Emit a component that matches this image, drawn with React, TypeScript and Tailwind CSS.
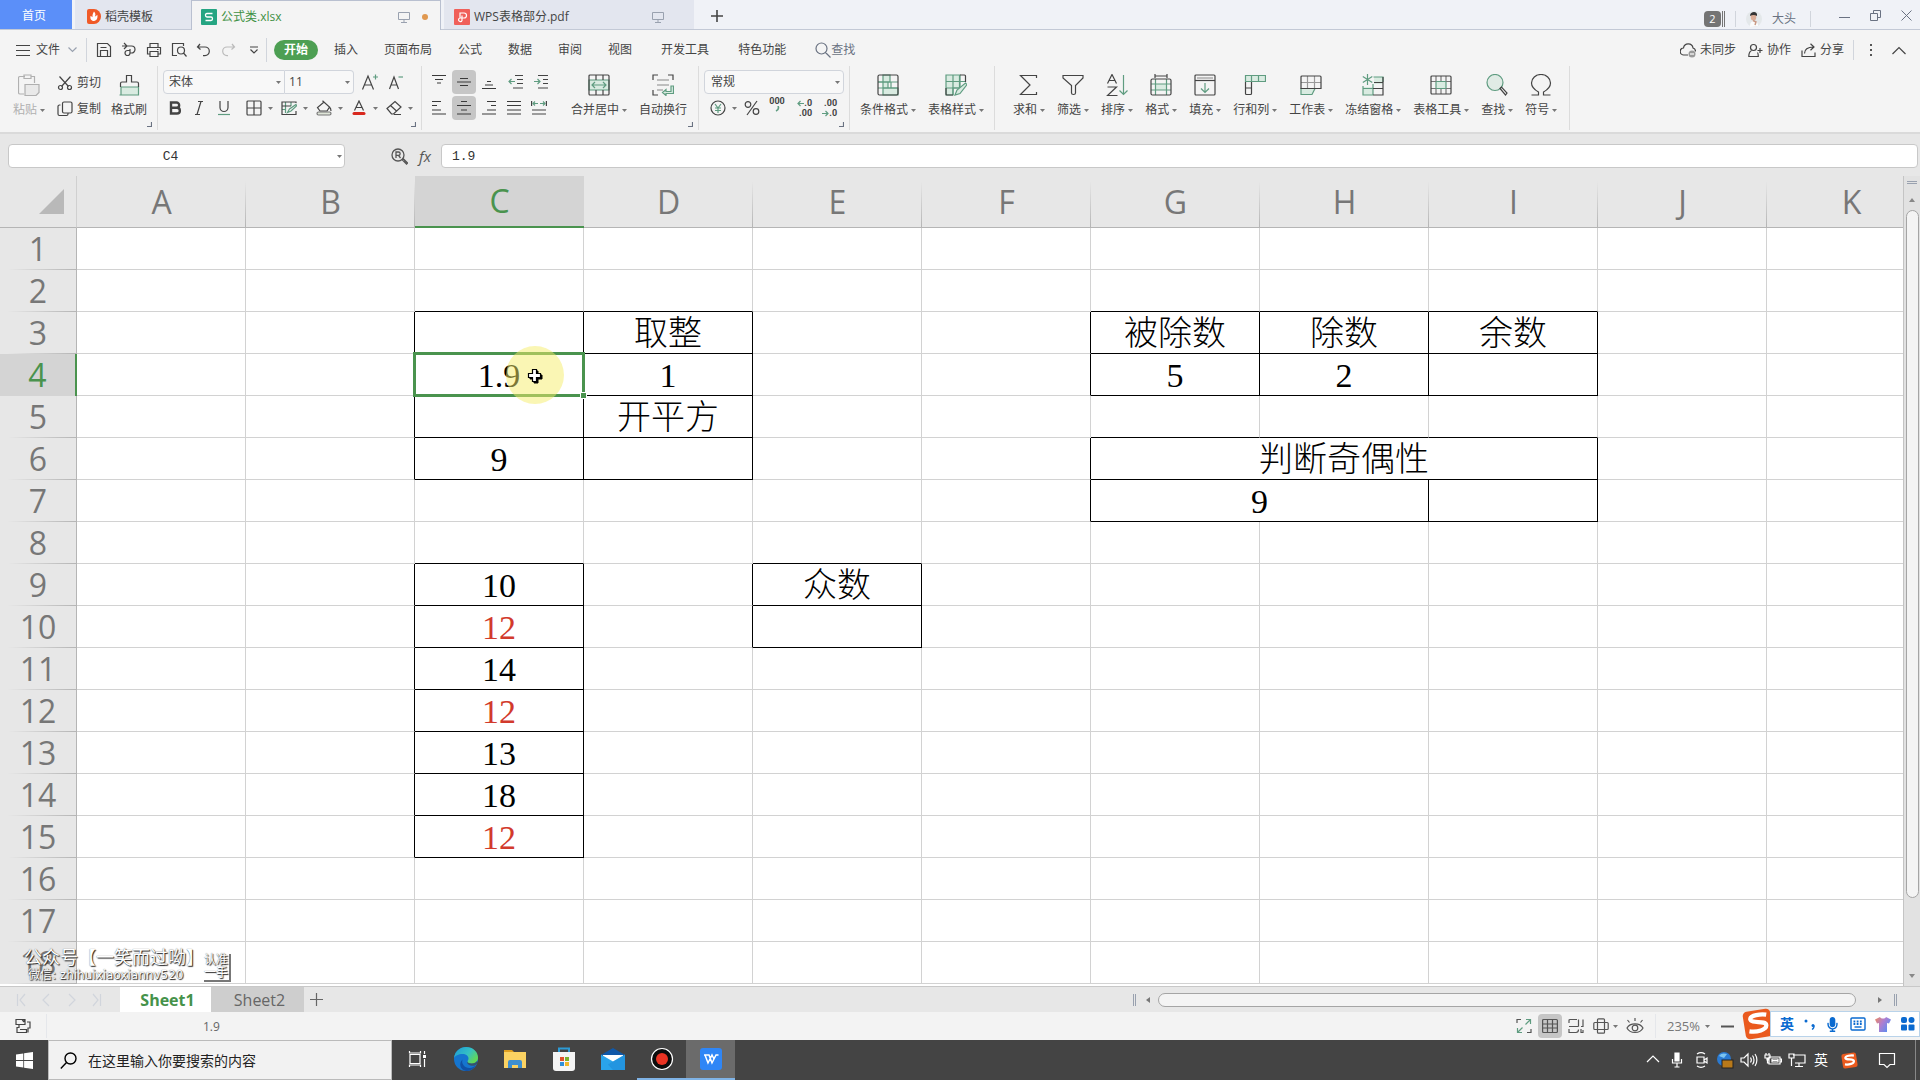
import React from 'react';
import { FaMicrophone, FaTshirt } from 'react-icons/fa';

type Kids = { children?: React.ReactNode };

const G = '#5f9c80';
const GF = '#d9ebe1';

const Svg: React.FC<Kids & { w?: number; h?: number; className?: string; sw?: number }> = ({ w = 16, h = w, className = '', sw = 1.2, children }) => (
  <svg width={w} height={h} viewBox={`0 0 ${w} ${h}`} fill="none" stroke="currentColor" strokeWidth={sw} className={`shrink-0 ${className}`} aria-hidden="true">
    {children}
  </svg>
);

const Caret = () => (
  <svg width="5" height="3" viewBox="0 0 5 3" className="shrink-0" aria-hidden="true">
    <path d="M0 0h5L2.5 3z" fill="#777" />
  </svg>
);

const Corner = () => (
  <Svg w={6} className="absolute right-[5px] bottom-[3px] text-gray-500">
    <path d="M5.500 1v4.500H1" />
  </Svg>
);

/* ---------- title bar ---------- */

const Monitor = () => (
  <Svg w={12} className="text-gray-400" sw={1}>
    <path d="M.5 1.500h11v7H.5zM6 8.500V11M3 11.500h6" />
  </Svg>
);

const TitleBar = () => (
  <header className="flex h-[30px] items-stretch border-b border-[#c3c9d6] bg-[#f0f2f7] text-xs text-[#444]">
    <button className="w-[72px] bg-[#5b8ff9] pt-[3px] pr-1 text-white">首页</button>
    <button className="ml-[3px] flex w-[116px] items-center gap-1 bg-[#e3e6ef] pt-1 pl-3">
      <svg width="14" height="15" viewBox="0 0 14 15" aria-hidden="true">
        <path d="M0 2a2 2 0 0 1 2-2h5a7 7.500 0 0 1 0 15H2a2 2 0 0 1-2-2z" fill="#f05a28" />
        <path d="M7 2.500c2 2 1.500 4 .8 5 1-.3 2-1 2.500-1.800.7 3-.5 6-3.300 6.300C4 12 3 9.500 3.500 7c.8.3 1.500.8 2 1.300C5.300 6 6 4 7 2.500z" fill="#fff" />
      </svg>
      稻壳模板
    </button>
    <button className="-mb-px flex w-[250px] items-center border border-b-0 border-[#b9c0d0] bg-[#f4f4f4] pt-[3px] pr-3 pl-[9px] text-[#3f9145]">
      <svg width="16" height="16" viewBox="0 0 16 16" aria-hidden="true">
        <rect width="16" height="16" rx="1" fill="#25a582" />
        <path d="M11.500 4.500H6a1.500 1.500 0 0 0-1.500 1.700C4.500 7.400 5 8 6 8h4c1 0 1.500.6 1.500 1.700 0 1.200-.5 1.800-1.500 1.800H4.500" fill="none" stroke="#fff" strokeWidth="1.300" />
      </svg>
      <span className="ml-1 flex-1 text-left">公式类.xlsx</span>
      <Monitor />
      <i className="ml-3 h-[6px] w-[6px] rounded-full bg-[#e0984f]" />
    </button>
    <button className="ml-[3px] flex w-[250px] items-center bg-[#e3e6ef] pt-1 pr-[30px] pl-[10px]">
      <svg width="16" height="16" viewBox="0 0 16 16" aria-hidden="true">
        <rect width="16" height="16" rx="1" fill="#f0605a" />
        <path d="M6 9V4h4a2.500 2.500 0 0 1 0 5H6.500a1.800 1.800 0 1 0 1.500 2.500V6.500" fill="none" stroke="#fff" strokeWidth="1.200" />
      </svg>
      <span className="ml-1 flex-1 text-left">WPS表格部分.pdf</span>
      <Monitor />
    </button>
    <button className="w-[46px] pt-[3px]" aria-label="新建">
      <Svg w={12} className="mx-auto" sw={1.600}><path d="M6 0v12M0 6h12" /></Svg>
    </button>
    <div className="ml-auto flex items-center pt-2 text-gray-500">
      <button className="flex items-center gap-px" aria-label="窗口">
        <span className="h-4 w-[17px] rounded-sm bg-[#747474] text-center text-[11px] leading-4 text-white">2</span>
        <i className="h-4 w-px bg-[#747474]" />
        <i className="h-4 w-px bg-[#747474]" />
      </button>
      <i className="mx-[10px] h-4 w-px bg-gray-300" />
      <button className="flex items-center gap-[10px]">
        <svg width="16" height="16" viewBox="0 0 16 16" aria-hidden="true">
          <circle cx="8" cy="8" r="8" fill="#e4e8ea" />
          <path d="M4 16c0-4 1-5 3-6h2c2 1 3 2 3 5z" fill="#fbfbfb" />
          <ellipse cx="7.500" cy="6" rx="2.800" ry="3.500" fill="#dcae98" />
          <path d="M4 5c0-3 2-4 4-4s3.500 1.500 3 4c-2-1.500-5-1.500-7 0z" fill="#333" />
          <path d="M7 9.500l3 1.500-1 3" stroke="#c99a85" strokeWidth="1.500" fill="none" />
        </svg>
        大头
      </button>
      <i className="mr-7 ml-[14px] h-4 w-px bg-gray-300" />
    </div>
    <div className="flex items-center gap-5 pt-px pr-2 text-gray-500">
      <button aria-label="最小化"><Svg w={11} sw={1}><path d="M0 7.500h11" /></Svg></button>
      <button aria-label="还原"><Svg w={11} sw={1}><path d="M.5 3.500h7v7h-7zM3.500 3.500v-3h7v7h-3" /></Svg></button>
      <button aria-label="关闭"><Svg w={11} sw={1}><path d="M.5.5l10 10M10.500.5l-10 10" /></Svg></button>
    </div>
  </header>
);

/* ---------- menu row ---------- */

const quickIcons = [
  { label: '保存', d: 'M1.500 1.500h10l3 3v10h-13zM4.500 5.500h6M4.500 14.500v-6h7v6' },
  { label: '输出为PDF', d: 'M3 1l3 3-3 3M1 4h9.500a3.500 3.500 0 0 1 0 7H9V7M9 11a2.500 2.500 0 1 1-2.500-2.500H9' },
  { label: '打印', d: 'M4 5V1.500h8V5M4 12H1.500V5.500h13V12H12M4 9.500h8v5H4zM11 7.500h1.500' },
  { label: '打印预览', d: 'M6 13.500H1.500v-12h11V4M13.500 8.500a3.500 3.500 0 1 1-7 0 3.500 3.500 0 0 1 7 0zM12.500 11l3 3.500' },
  { label: '撤销', d: 'M4 2L1.500 5l3 2.500M1.500 5H9a4.300 4.300 0 0 1 0 8.600H7' },
];

const menuTabs = ['插入', '页面布局', '公式', '数据', '审阅', '视图'];

const MenuRow = () => (
  <div className="flex h-9 items-center pt-1 text-xs text-[#444]">
    <button className="flex items-center pl-4">
      <Svg w={14}><path d="M0 2.500h14M0 7.500h14M0 12.500h14" /></Svg>
      <span className="ml-[6px]">文件</span>
      <Svg w={9} h={6} className="ml-2 text-gray-400"><path d="M.5.5l4 4 4-4" /></Svg>
    </button>
    <i className="mr-1 ml-[9px] h-6 w-px bg-gray-300" />
    {quickIcons.map((q) => (
      <button key={q.label} className="w-[25px]" aria-label={q.label}>
        <Svg className="mx-auto"><path d={q.d} /></Svg>
      </button>
    ))}
    <button className="w-[25px] text-[#bbb]" aria-label="恢复">
      <Svg className="mx-auto"><path d="M11 2l2.500 3-3 2.500M13.500 5H6a4.300 4.300 0 0 0 0 8.600h1" /></Svg>
    </button>
    <button className="w-[25px]" aria-label="更多">
      <Svg w={8} className="mx-auto"><path d="M0 1h8M.5 3.500L4 7l3.500-3.500" /></Svg>
    </button>
    <i className="h-6 w-px bg-gray-300" />
    <nav className="ml-[7px] flex items-center gap-[26px]">
      <button className="-mr-[10px] h-5 w-11 rounded-full bg-[#4d9f53] font-bold text-white">开始</button>
      {menuTabs.map((t) => <button key={t}>{t}</button>)}
    </nav>
    <nav className="ml-[29px] flex items-center gap-[29px]">
      <button>开发工具</button>
      <button>特色功能</button>
      <button className="flex items-center text-gray-500">
        <Svg><path d="M12 6.500a5.500 5.500 0 1 1-11 0 5.500 5.500 0 0 1 11 0zM10.500 10.500l5 5" /></Svg>
        查找
      </button>
    </nav>
    <div className="ml-auto flex items-center pr-[14px]">
      <button className="flex items-center gap-1">
        <Svg>
          <path d="M8 13H4a3.500 3.500 0 0 1-.5-7A4.800 4.800 0 0 1 13 6c2 .5 2.500 2 2.500 3.500" />
          <circle cx="12" cy="12" r="3.500" fill="#999" stroke="none" />
          <path d="M10 12h4" stroke="#fff" />
        </Svg>
        未同步
      </button>
      <button className="ml-3 flex items-center gap-1">
        <Svg w={15}><path d="M8.500 4.500a3 3 0 1 1-6 0 3 3 0 0 1 6 0zM3.500 7.500C1.500 8.500.8 10 .8 13.500h9.500c0-2 0-3-.8-4M12 5v5M9.500 7.500h5" /></Svg>
        协作
      </button>
      <button className="ml-[10px] flex items-center gap-1">
        <Svg w={15}><path d="M1 7.500v6h13v-4M3.500 10.500c0-4 3-6.500 9-6.500M9.500.8L13 4 9.500 7.300" /></Svg>
        分享
      </button>
      <i className="mx-[9px] h-5 w-px bg-gray-300" />
      <button className="w-4" aria-label="选项">
        <svg width="3" height="14" viewBox="0 0 3 14" fill="#555" className="mx-auto"><path d="M0 1h2v2H0zM0 6h2v2H0zM0 11h2v2H0z" /></svg>
      </button>
      <button className="ml-[13px]" aria-label="折叠功能区">
        <Svg w={14} h={9}><path d="M.5 8L7 1.500 13.500 8" /></Svg>
      </button>
    </div>
  </div>
);

/* ---------- ribbon ---------- */

const Group: React.FC<Kids & { className: string }> = ({ className, children }) => (
  <div className={`relative flex h-16 shrink-0 items-start border-r border-[#dcdcdc] pt-1 ${className}`}>{children}</div>
);

const Big: React.FC<Kids & { label: string; caret?: boolean; dim?: boolean }> = ({ label, caret = true, dim, children }) => (
  <button className={`flex flex-col items-center pt-1 ${dim ? 'text-[#b0b0b0]' : 'text-[#444]'}`}>
    <Svg w={22}>{children}</Svg>
    <span className="mt-[6px] flex items-center gap-[3px] leading-4">
      {label}
      {caret && <Caret />}
    </span>
  </button>
);

const Small: React.FC<Kids & { label: string; on?: boolean; caret?: boolean }> = ({ label, on, caret, children }) => (
  <button
    aria-label={label}
    className={`flex h-6 items-center ${caret ? 'w-[35px] gap-[6px] pl-[2px]' : 'w-6 justify-center'} ${on ? 'rounded bg-[#c6c6c6]' : ''}`}
  >
    {children}
    {caret && <Caret />}
  </button>
);

const Lines = ({ d }: { d: string }) => <Svg><path d={d} stroke="#3a3a3a" /></Svg>;

const bigTools = [
  { label: '求和', icon: <path d="M18.500 4V1.500h-16L12 11l-9.500 9.500h16V18" /> },
  { label: '筛选', icon: <path d="M1 1.500h20v2.500l-7.500 7.500V19c0 2-4 2-4 0v-7.500L1 4z" /> },
  {
    label: '排序',
    icon: <><path d="M1.500 9.500L6 .5l4.500 9M3 6.500h6M1.500 13h9L1.500 21.500h10" /><path d="M17.500 1v19.500M13.500 16.500l4 4 4-4" stroke={G} /></>,
  },
  {
    label: '格式',
    icon: <><path d="M5 0v4M17 0v4M5 2h12" /><path d="M5 10h12v6H5z" fill={GF} stroke="none" /><path d="M1 10h20M1 16h20M5.500 5v16M16.500 5v16" stroke={G} /><rect x="1" y="5" width="20" height="16" rx="1.500" /></>,
  },
  {
    label: '填充',
    icon: <><rect x="1" y="1" width="20" height="20" rx="1" /><path d="M1 6.500h20" /><path d="M3 4h16" stroke="#999" /><path d="M11 9v9.500M7 14.500l4 4 4-4" stroke={G} /></>,
  },
  {
    label: '行和列',
    icon: <><path d="M1.500 8v11.500a1 1 0 0 0 1 1h4a1 1 0 0 0 1-1V8M1.500 14h6" /><path d="M1.500 1.500h20v6h-20zM7.500 1.500v6M14.500 1.500v6" stroke={G} fill={GF} /></>,
  },
  {
    label: '工作表',
    icon: <><path d="M1 14.500h14l-3 6H1z" stroke={G} fill={GF} /><path d="M1 8.500h20M7.500 2v12.500M14.500 2v12.500" stroke="#999" /><path d="M1 14.500V3a1 1 0 0 1 1-1h18a1 1 0 0 1 1 1v11.500z" /></>,
  },
  {
    label: '冻结窗格',
    icon: <><path d="M12 3h9v7h-9zM1 13h10v8H1z" fill={GF} stroke="none" /><path d="M11.500 3H21v5M1 12v9h10M1 14.500h10M11 10v11" stroke={G} /><path d="M11 21h10V3M11 14.500h10M12 8.500h9" /><path d="M5.500 0v11M.8 2.500l9.500 6M10.300 2.500l-9.500 6" stroke={G} /></>,
  },
  {
    label: '表格工具',
    icon: <><path d="M6 7.500h10v7H6z" stroke={G} fill={GF} /><path d="M6 2v5M16 2v5M6 15v5M16 15v5M11 2v5M11 15v5M1 7.500h5M16 7.500h5M1 14.500h5M16 14.500h5" stroke="#777" /><rect x="1" y="2" width="20" height="18" rx="1" /></>,
  },
  {
    label: '查找',
    icon: <><circle cx="9" cy="8.500" r="8" stroke={G} fill="#e0ebe5" /><path d="M14 14.500l1.500-1.500 5.500 6-1.500 2z" /></>,
  },
  { label: '符号', icon: <path d="M1.500 21h7v-3C4 15.500 1.500 12.500 1.500 9a9.500 8.500 0 0 1 19 0c0 3.500-2.500 6.500-7 9v3h7" /> },
];

const Ribbon = () => (
  <div className="flex h-[66px] overflow-hidden text-xs text-[#444]">
    <Group className="pr-[10px] pl-[13px]">
      <Big label="粘贴" dim>
        <path d="M7 2.500H2a1.500 1.500 0 0 0-1.500 1.500v14.500A1.500 1.500 0 0 0 2 20h4M13 2.500h3.500V9M6 1h7v3.500H6z" />
        <path d="M7 10.500h14v8l-3 3H7z" fill="#e9e9e9" />
      </Big>
      <div className="ml-3 flex flex-col gap-[2px] pt-px">
        <button className="flex h-6 items-center gap-1">
          <Svg><path d="M2.500 1.500l9 10M13.500 1.500l-9 10" /><circle cx="3.500" cy="12.500" r="2" /><circle cx="12.500" cy="12.500" r="2" /></Svg>
          剪切
        </button>
        <button className="flex h-6 items-center gap-1">
          <Svg><rect x="5.500" y="1" width="9.500" height="11" rx="1.500" /><path d="M3.500 4H2.500A1.500 1.500 0 0 0 1 5.500V13a1.500 1.500 0 0 0 1.500 1.500h7A1.500 1.500 0 0 0 11 13v-1" /></Svg>
          复制
        </button>
      </div>
      <div className="ml-[10px] flex">
        <Big label="格式刷" caret={false}>
          <path d="M3 13v8H1.500h19V13z" stroke={G} fill={GF} />
          <path d="M2.500 13V9.500a1.500 1.500 0 0 1 1.500-1.500h4.500V1.500h5V8H19a1.500 1.500 0 0 1 1.500 1.500V13" />
        </Big>
      </div>
      <Corner />
    </Group>

    <Group className="w-[264px] flex-col gap-[2px] pl-[5px]">
      <div className="flex h-6 items-center">
        <label className="relative flex items-center">
          <select aria-label="字体" className="h-6 w-[122px] appearance-none rounded-l border border-gray-300 bg-[#f8f8f8] pl-[5px]">
            <option>宋体</option>
          </select>
          <span className="pointer-events-none absolute right-1"><Caret /></span>
        </label>
        <label className="relative flex items-center">
          <select aria-label="字号" className="h-6 w-[69px] appearance-none rounded-r border border-l-0 border-gray-300 bg-[#f8f8f8] pl-1 text-xs">
            <option>11</option>
          </select>
          <span className="pointer-events-none absolute right-1"><Caret /></span>
        </label>
        <span className="ml-1 flex gap-[2px]">
          <Small label="增大字号">
            <Svg w={18}><path d="M1.500 16.500L7 3l5.500 13.500M3.500 12h7" /><path d="M12 4h5M14.500 1.500v5" stroke={G} /></Svg>
          </Small>
          <Small label="减小字号">
            <Svg w={18}><path d="M2.500 16L7 4l4.500 12M4 12h6" /><path d="M11.500 4h4.500" stroke={G} /></Svg>
          </Small>
        </span>
      </div>
      <div className="flex">
        <Small label="加粗"><Svg sw={2.400}><path d="M4 2.500h5.500a2.500 2.500 0 0 1 0 5.300H4zM4 7.800h6a2.800 2.800 0 0 1 0 5.700H4z" /></Svg></Small>
        <Small label="倾斜"><Svg><path d="M7 1.500h5M4 14.500h5M10 1.500l-4 13" /></Svg></Small>
        <span className="mr-2 ml-px flex">
          <Small label="下划线"><Svg><path d="M4 1v6.500a4 4 0 0 0 8 0V1" /><path d="M2 14.500h12" stroke={G} /></Svg></Small>
        </span>
        <Small label="边框" caret><Svg><rect x="1" y="1" width="14" height="14" rx="1" /><path d="M8 1v14M1 8h14" /></Svg></Small>
        <Small label="绘图边框" caret>
          <Svg><path d="M1 9.500h4M4.500 2v11M10 2v4" stroke={G} /><path d="M15 3V2H1v12.500h14V11M1 6h9" /><path d="M6.500 12.500l2-3.500L15 4.500l.5 1.500L10 11z" stroke={G} /></Svg>
        </Small>
        <Small label="填充颜色" caret>
          <Svg><path d="M6.500.8l7 6.200-2.500 4H4L1.500 7.500 7.500 2.500M13.500 7c1 1 1.500 2 1.500 4" /><rect x="1" y="12" width="14" height="3" rx="1.500" fill="#dfe5d8" stroke="#777" /></Svg>
        </Small>
        <Small label="字体颜色" caret>
          <Svg><path d="M3.500 10.500L8 1l4.500 9.500M5 7.500h6" /><rect x="1.500" y="12" width="13" height="3" rx="1.500" fill="#d8281e" stroke="none" /></Svg>
        </Small>
        <Small label="清除" caret>
          <Svg><path d="M1 8.500L9 1.500 15 7 7.500 14H5.500zM4.500 5.500l6 5.500M8 14.500h7" /></Svg>
        </Small>
      </div>
      <Corner />
    </Group>

    <Group className="w-[277px] pl-[5px]">
      <div className="flex flex-col gap-[2px]">
        <div className="flex gap-px">
          <Small label="顶端对齐"><Lines d="M1 1.500h14M4 5.500h8M6 9h4" /></Small>
          <Small label="垂直居中" on><Lines d="M4 4.500h8M1 8h14M4 11.500h8" /></Small>
          <Small label="底端对齐"><Lines d="M6 7.500h4M4 11h8M1 14.500h14" /></Small>
          <i className="w-px" />
          <Small label="减少缩进"><Svg><path d="M7 1.500h8M9 5.500h6M9 9.500h6M5 14h10" /><path d="M7 7.500H1M3.500 5L1 7.500 3.500 10" stroke={G} /></Svg></Small>
          <Small label="增加缩进"><Svg><path d="M5 1.500h10M10 5.500h5M10 9.500h5M5 14h10" /><path d="M1 7.500h6M4.500 5L7 7.500 4.500 10" stroke={G} /></Svg></Small>
        </div>
        <div className="flex gap-px">
          <Small label="左对齐"><Lines d="M1 1.500h9M1 5.500h5M1 10h9M1 14h14" /></Small>
          <Small label="水平居中" on><Lines d="M5 1.500h6M1 5.500h14M5 10h6M1 14h14" /></Small>
          <Small label="右对齐"><Lines d="M6 1.500h9M10 5.500h5M6 10h9M1 14h14" /></Small>
          <Small label="两端对齐"><Lines d="M1 1.500h14M1 5.500h14M1 10h14M1 14h14" /></Small>
          <Small label="分散对齐"><Svg><path d="M.6 1v5M15.400 1v5M1 10h14M1 14h14" /><path d="M7 3.500H2M4 1.500l-2 2 2 2M9 3.500h5M12 1.500l2 2-2 2" stroke={G} /></Svg></Small>
        </div>
      </div>
      <div className="ml-[18px] flex gap-3">
        <Big label="合并居中">
          <path d="M1 6h20v10H1z" fill={GF} stroke={G} />
          <rect x="1" y="1" width="20" height="20" rx="1" />
          <path d="M8 1v5M15 1v5M8 16v5M15 16v5" />
          <path d="M4 11h14M7 8l-3 3 3 3M15 8l3 3-3 3" stroke={G} />
        </Big>
        <Big label="自动换行" caret={false}>
          <path d="M1 6V1h5M16 1h5v5M1 16v5h5" />
          <path d="M5 6h12M5 11h12M5 16h6" stroke="#888" />
          <path d="M21.500 12v7.500H14v2l-3.500-3 3.500-3v2h5V12z" stroke={G} fill={GF} />
        </Big>
      </div>
      <Corner />
    </Group>

    <Group className="w-[151px] flex-col gap-[2px] pl-[5px]">
      <label className="relative flex items-center">
        <select aria-label="数字格式" className="h-6 w-[140px] appearance-none rounded border border-gray-300 bg-[#f8f8f8] pl-[6px]">
          <option>常规</option>
        </select>
        <span className="pointer-events-none absolute right-1"><Caret /></span>
      </label>
      <div className="flex items-center pl-1">
        <Small label="货币" caret><Svg><circle cx="8" cy="8" r="7" /><path d="M5 4l3 4 3-4M8 8v5M5 8h6M5 10.500h6" stroke={G} /></Svg></Small>
        <span className="-ml-[3px] flex"><Small label="百分比"><Svg><circle cx="4" cy="4.500" r="2.800" /><circle cx="12" cy="11.500" r="2.800" /><path d="M13 1L3 15" /></Svg></Small></span>
        <button className="flex h-6 w-[26px] flex-col items-center font-['Roboto',sans-serif] text-[9px] leading-[10px] font-bold text-[#444]">
          000
          <Svg w={5} h={6} sw={1.600}><path d="M3 0c1 2 0 4-2 5" stroke={G} /></Svg>
        </button>
        <button aria-label="增加小数位数" className="flex h-6 w-[26px] flex-col items-end justify-center pr-1 font-['Roboto',sans-serif] text-[9px] leading-[10px] font-bold">
          <span className="flex items-center"><Svg w={7}><path d="M7 3.500H1M3.500 1L1 3.500 3.500 6" stroke={G} /></Svg>.0</span>
          <span>.00</span>
        </button>
        <button aria-label="减少小数位数" className="flex h-6 w-[25px] flex-col items-end justify-center pr-1 font-['Roboto',sans-serif] text-[9px] leading-[10px] font-bold">
          <span>.00</span>
          <span className="flex items-center"><Svg w={7}><path d="M0 3.500h6M3.500 1L6 3.500 3.500 6" stroke={G} /></Svg>.0</span>
        </button>
      </div>
      <Corner />
    </Group>

    <Group className="gap-3 pr-[10px] pl-[10px]">
      <Big label="条件格式">
        <path d="M6 1h7v7H6zM6 8h5v6H6zM6 14h15v7H6zM1 8h5" fill={GF} stroke={G} />
        <path d="M1 8h20M1 14h20M14 8v6" stroke={G} />
        <rect x="1" y="1" width="20" height="20" rx="1.500" />
      </Big>
      <Big label="表格样式">
        <path d="M1 1h14v13H8v7H1z" fill={GF} stroke={G} />
        <path d="M1 7.500h19M1 14h14M8 1v20M14.500 1v13" stroke={G} />
        <path d="M15 1h4.500a1 1 0 0 1 1 1v6M1 14v6a1 1 0 0 0 1 1h6" />
        <path d="M10 21l2-5L20.500 9l1.500 1.500-7 9z" fill={GF} stroke={G} />
      </Big>
    </Group>

    <Group className="gap-3 pr-3 pl-[18px]">
      {bigTools.map((t) => <Big key={t.label} label={t.label}>{t.icon}</Big>)}
    </Group>
  </div>
);

/* ---------- formula bar ---------- */

const FormulaBar = () => (
  <div className="flex h-11 items-center border-t-2 border-[#dadada] bg-[#e7e7e7] pt-[2px] pr-[2px] pl-2 font-['Liberation_Mono','Noto_Sans_CJK_SC',monospace] text-[13px] text-[#333]">
    <label className="relative flex items-center">
      <input aria-label="名称框" defaultValue="C4" className="h-6 w-[337px] rounded border border-[#c8c8c8] bg-white pr-3 text-center" />
      <span className="absolute right-[3px]"><Caret /></span>
    </label>
    <button className="ml-[46px] text-[#555]" aria-label="查找函数">
      <Svg w={17} sw={1.300}><circle cx="7" cy="7" r="6" /><path d="M5 10V4h2.500a1.500 1.500 0 0 1 0 3.300H5M7.500 7.300l2 2.700" /><path d="M11.500 12l1-1 4 4-1 1z" /></Svg>
    </button>
    <button className="ml-[9px] w-4 font-['Open_Sans',sans-serif] text-[15px] text-[#555] italic">fx</button>
    <input aria-label="编辑栏" defaultValue="1.9" className="ml-2 h-6 flex-1 rounded border border-[#c8c8c8] bg-white px-[10px]" />
  </div>
);

/* ---------- sheet ---------- */

const cols = ['A', 'B', 'C', 'D', 'E', 'F', 'G', 'H', 'I', 'J', 'K'];
const rows = Array.from({ length: 18 }, (_, i) => i + 1);

// framed ranges: [col from, row from, col to, row to]
const frames = [
  [2, 3, 3, 6],
  [6, 3, 8, 4],
  [6, 6, 8, 7],
  [2, 9, 2, 15],
  [4, 9, 4, 10],
];

const framed = (c: number, r: number) => frames.some(([c1, r1, c2, r2]) => c >= c1 && c <= c2 && r >= r1 && r <= r2);

const values: Record<string, string> = {
  D3: '取整', C4: '1.9', D4: '1', D5: '开平方', C6: '9',
  G3: '被除数', H3: '除数', I3: '余数', G4: '5', H4: '2',
  G6: '判断奇偶性', G7: '9',
  C9: '10', C10: '12', C11: '14', C12: '12', C13: '13', C14: '18', C15: '12',
  E9: '众数',
};

const red = ['C10', 'C12', 'C15'];
const spans: Record<string, number> = { G6: 3, G7: 2 };
const covered = ['H6', 'I6', 'H7'];

const Cell = ({ c, r }: { c: number; r: number }) => {
  const id = cols[c] + r;
  if (covered.includes(id)) return null;
  const span = spans[id] ?? 1;
  const right = framed(c, r) || framed(c + 1, r);
  const bottom = framed(c, r) || framed(c, r + 1);
  return (
    <td
      colSpan={span}
      className={`relative h-[42px] border-r border-b p-0 text-center leading-[41px] ${right ? 'border-r-black' : 'border-r-[#d2d2d2]'} ${bottom ? 'border-b-black' : 'border-b-[#d2d2d2]'} ${red.includes(id) ? 'text-[#d23a2c]' : 'text-black'}`}
    >
      {values[id] && <span className="block h-[41px] pt-[3px] leading-[38px]">{values[id]}</span>}
      {id === 'C4' && (
        <>
          <i className="absolute -inset-[2px] z-10 border-3 border-[#4a934e]" />
          <i className="absolute -right-[4px] -bottom-[4px] z-10 h-[7px] w-[7px] border border-white bg-[#4a934e]" />
          <i className="absolute top-1/2 left-[91px] z-20 h-[58px] w-[58px] -translate-y-1/2 rounded-full bg-[#f5ee6a]/50" />
          <svg width="16" height="16" viewBox="0 0 16 16" className="absolute top-[14px] left-28 z-20" aria-hidden="true">
            <path d="M5.500 1.500h4v4h4v4h-4v4h-4v-4h-4v-4h4z" transform="translate(1.500 1.500)" fill="#000" stroke="#000" />
            <path d="M5.500 1.500h4v4h4v4h-4v4h-4v-4h-4v-4h4z" fill="#fff" stroke="#000" strokeWidth="1.200" />
          </svg>
        </>
      )}
    </td>
  );
};

const Sheet = () => (
  <div className="flex min-h-0 flex-1 bg-[#e7e7e7]">
    <main className="relative min-w-0 flex-1 overflow-hidden border-r border-[#c4c4c4] bg-white">
      <table className="w-[1936px] table-fixed border-separate border-spacing-0 font-['Liberation_Serif','Noto_Sans_CJK_SC',serif] text-[34px] font-light">
        <colgroup>
          <col className="w-[77px]" />
          {cols.map((c) => <col key={c} className="w-[169px]" />)}
        </colgroup>
        <thead className="font-['Open_Sans','Noto_Sans',sans-serif] text-[32px] text-[#777]">
          <tr>
            <th className="h-[52px] border-r border-b border-r-[#d0d0d0] border-b-[#b5b5b5] bg-[#e7e7e7] p-0">
              <svg width="25" height="25" viewBox="0 0 25 25" className="mr-3 ml-auto" aria-label="全选"><path d="M25 0v25H0z" fill="#b9b9b9" /></svg>
            </th>
            {cols.map((c) => (
              <th
                key={c}
                className={`h-[52px] bg-[length:1px_100%] bg-right bg-no-repeat p-0 font-normal ${c === 'C' ? 'border-b-2 border-[#4a934e] bg-[#d4d4d4] text-[#4a934e]' : 'border-b border-[#b5b5b5] bg-[#e7e7e7] bg-[linear-gradient(to_bottom,#e7e7e7_10%,#b5b5b5)]'}`}
              >
                {c}
              </th>
            ))}
          </tr>
        </thead>
        <tbody>
          {rows.map((r) => (
            <tr key={r}>
              <th
                className={`h-[42px] bg-[length:100%_1px] bg-bottom bg-no-repeat p-0 font-['Open_Sans','Noto_Sans',sans-serif] text-[32px] leading-[42px] font-normal ${r === 4 ? 'border-r-2 border-[#4a934e] bg-[#d4d4d4] text-[#4a934e]' : 'border-r border-[#b5b5b5] bg-[#e7e7e7] bg-[linear-gradient(to_right,#e7e7e7_10%,#b5b5b5)] text-[#777]'}`}
              >
                {r}
              </th>
              {cols.map((_, c) => <Cell key={c} c={c} r={r} />)}
            </tr>
          ))}
        </tbody>
      </table>
      <div className="absolute bottom-1 left-6 flex items-end font-['DejaVu_Sans','Noto_Sans_CJK_SC',sans-serif] text-white [text-shadow:1px_1px_1px_#222,0_0_1px_#555]">
        <div>
          <p className="text-lg leading-[22px]">公众号【一笑而过呦】</p>
          <p className="pl-1 text-xs leading-[13px]">微信: zhihuixiaoxiannv520</p>
        </div>
        <p className="w-[27px] border-r-2 border-b-2 border-[#777] text-xs leading-[13px]">认准一手</p>
      </div>
    </main>
    <div className="flex w-4 flex-col items-center bg-[#e2e2e2]">
      <i className="mt-[5px] h-[3px] w-[10px] border-y border-gray-400" />
      <button className="mt-[14px]" aria-label="向上滚动"><svg width="6" height="4" viewBox="0 0 6 4"><path d="M0 4h6L3 0z" fill="#888" /></svg></button>
      <div className="mt-2 w-[13px] flex-[9] rounded-full border border-[#a5a5a5] bg-[#f4f4f4]" />
      <div className="flex-1" />
      <button className="mb-2" aria-label="向下滚动"><svg width="6" height="4" viewBox="0 0 6 4"><path d="M0 0h6L3 4z" fill="#888" /></svg></button>
    </div>
  </div>
);

/* ---------- sheet tabs and status bar ---------- */

const navArrows = ['M1.500 1v12M9 1L4 7l5 6', 'M8 1L2 7l6 6', 'M2 1l6 6-6 6', 'M1 1l5 6-5 6M8.500 1v12'];

const SheetTabs = () => (
  <div className="flex h-[26px] items-stretch border-t border-[#c8c8c8] bg-[#e7e7e7] text-base text-[#666]">
    <div className="flex w-[120px] items-center justify-between pr-[18px] pl-4 text-gray-300">
      {navArrows.map((d) => <button key={d} aria-label="切换工作表"><Svg w={10} h={14}><path d={d} /></Svg></button>)}
    </div>
    <button className="w-[91px] bg-white pl-1 leading-6 font-bold text-[#45924a]">Sheet1</button>
    <button className="w-[93px] bg-[#cecece] pl-1 leading-6">Sheet2</button>
    <button className="w-6" aria-label="新建工作表"><Svg w={13} className="mx-auto"><path d="M6.500 0v13M0 6.500h13" /></Svg></button>
    <div className="ml-auto flex w-[41%] items-center pr-[23px]">
      <i className="h-3 w-[3px] border-x border-gray-400" />
      <button className="mr-2 ml-[10px]" aria-label="向左滚动"><svg width="4" height="6" viewBox="0 0 4 6"><path d="M4 0v6L0 3z" fill="#777" /></svg></button>
      <div className="h-[14px] flex-1 rounded-full border border-[#a5a5a5] bg-[#f4f4f4]" />
      <button className="ml-[22px]" aria-label="向右滚动"><svg width="4" height="6" viewBox="0 0 4 6"><path d="M0 0v6l4-3z" fill="#777" /></svg></button>
      <i className="ml-3 h-3 w-[3px] border-x border-gray-400" />
    </div>
  </div>
);

const Sogou = ({ size }: { size: number }) => (
  <svg width={size} height={size} viewBox="0 0 30 30" className="shrink-0" aria-hidden="true">
    <g transform="rotate(-9 15 15)">
      <rect x="2" y="2" width="26" height="26" rx="4" fill="#ea5a1e" />
      <path d="M24 7.500c-5-1.500-15-2-15.500 2 0 4.500 14 3 14 7.500 0 5-10 5.500-16.500 3.500" fill="none" stroke="#fff" strokeWidth="4" />
    </g>
  </svg>
);

const ImeBar = () => (
  <div className="absolute right-0 bottom-10 z-30 flex items-center text-[#0a6ad0]">
    <Sogou size={32} />
    <div className="-ml-1 flex h-[26px] w-[150px] items-center justify-between border border-[#b9d3ea] bg-white pr-1 pl-[9px]">
      <span className="text-sm font-bold">英</span>
      <Svg w={12}><circle cx="2" cy="3" r="1.500" fill="currentColor" stroke="none" /><circle cx="9" cy="7.500" r="1.500" fill="currentColor" stroke="none" /><path d="M10 7.500c.3 1.500-.5 3-2 4" /></Svg>
      <FaMicrophone size={15} />
      <Svg w={16} sw={1.400}><rect x="1" y="2" width="14" height="12" rx="1" /><path d="M3.500 5.500h9M3.500 8h9" strokeDasharray="1.800 1.400" strokeWidth="1.800" /><path d="M4.500 11h7" /></Svg>
      <svg width="16" height="15" viewBox="0 0 16 15" aria-hidden="true">
        <defs>
          <linearGradient id="shirt" x1="0" y1="0" x2="1" y2=".6"><stop stopColor="#f08a5a" /><stop offset=".5" stopColor="#b07ed0" /><stop offset="1" stopColor="#5c8cf0" /></linearGradient>
        </defs>
        <path d="M5 0c1 2 5 2 6 0l5 2.500-2 4-2-.5v9H4V6l-2 .5-2-4z" fill="url(#shirt)" />
      </svg>
      <svg width="14" height="14" viewBox="0 0 14 14" fill="currentColor" aria-hidden="true"><rect width="6" height="6" rx="2" /><rect x="7.500" width="6" height="6" rx="3" /><rect y="7.500" width="6" height="6" rx="1" /><rect x="7.500" y="7.500" width="6" height="6" rx="1" /></svg>
    </div>
  </div>
);

const StatusBar = () => (
  <footer className="flex h-7 items-center bg-[#f3f3f3] text-xs text-[#666]">
    <button className="ml-[15px]" aria-label="状态">
      <Svg className="text-[#444]"><path d="M1 1.500h9v5H1zM4 6.500v3H2v5h9.500v-3H5M7 1.500l1.500 2L10 2M12 4h3v6h-2v4.500" /></Svg>
    </button>
    <i className="ml-[15px] h-6 w-px bg-gray-200" />
    <span className="ml-[156px] pt-px text-xs">1.9</span>
    <div className="ml-auto flex items-center pr-[186px] text-[#555]">
      <button aria-label="全屏"><Svg><path d="M1 5V1.500h4M15 11v3.500h-4" /><path d="M10 1.500h4.500V6M14.500 1.500L9.500 6.500M6 14.500H1.500V10M1.500 14.500l5-5" stroke={G} /></Svg></button>
      <button className="ml-[6px] flex h-6 w-6 items-center justify-center rounded-sm bg-[#c6c6c6]" aria-label="普通视图"><Svg><rect x=".6" y="1.500" width="14.800" height="13" rx="1" /><path d="M5.500 1.500v13M10.500 1.500v13M.6 6h15M.6 10h15" /></Svg></button>
      <button className="ml-[6px]" aria-label="分页预览"><Svg><path d="M1 5V2.500a1 1 0 0 1 1-1h7M10.500 1.500v7M1 8.500h9.500M15 1.500v7h-2M1 11v3.500h7c1.500 0 2.500-1 2.500-3M13 11v3.500h2V12" /></Svg></button>
      <button className="ml-[9px] flex items-center gap-1" aria-label="页面布局"><Svg><rect x="4.500" y=".8" width="7" height="14.400" rx="1" /><rect x=".8" y="4.500" width="14.400" height="7" rx="1" /></Svg><Caret /></button>
      <button className="ml-2" aria-label="护眼模式"><Svg w={18}><path d="M1 11c3-5.500 13-5.500 16 0-3 6-13 6-16 0zM9 4V1M3.500 5.500l-2-2.500M14.500 5.500l2-2.500" /><circle cx="9" cy="11" r="2.800" /></Svg></button>
      <i className="mx-[11px] h-6 w-px bg-gray-200" />
      <button className="flex items-center gap-[5px] pt-px text-[13px] text-[#777]">235%<Caret /></button>
      <button className="ml-[11px]" aria-label="缩小"><Svg w={13} sw={2}><path d="M0 6.500h13" /></Svg></button>
    </div>
  </footer>
);

/* ---------- windows taskbar ---------- */

const TaskIcon: React.FC<Kids & { label: string; running?: boolean; active?: boolean }> = ({ label, running, active, children }) => (
  <button aria-label={label} className={`flex h-full w-[49px] items-center justify-center border-b-2 ${active ? 'border-[#7fb3e6] bg-[#6b6b6b]' : running ? 'border-[#7fb3e6]' : 'border-transparent'}`}>
    <svg width="24" height="24" viewBox="0 0 24 24" fill="none" aria-hidden="true">{children}</svg>
  </button>
);

const trayIcons = [
  { label: '显示隐藏图标', d: 'M3 11l6-6 6 6' },
  { label: '麦克风', d: 'M7 2h4v8H7zM8 2v8M9 2v8M10 2v8M4.500 8v4h9V8M9 12v4M6.500 16h5' },
  { label: '摄像头', d: 'M5 6h7v6H5zM12 9l3-2v5l-3-2M5 3c3-2 5-2 8 0M5 15c3 2 5 2 8 0' },
];

const trayIcons2 = [
  { label: '音量', d: 'M1 7v4h3l4 4V3L4 7zM10.500 6.500c1 1.500 1 3.500 0 5M12.500 4.500c2 2.500 2 6.500 0 9M15 3c2.500 3.500 2.500 8.500 0 12' },
  { label: '电池', d: 'M5 6h11v7H5zM16 8h1.500v3H16M1 4h5v3H4v2H3V7H1zM2 2v2M5 2v2M3.500 9v3H5M8 8h6v3H8zM8 9.500h6' },
  { label: '网络', d: 'M5 4h12v8H7M1 3h5v4H1zM3.500 7v8M11 12v3M7 15.500h8' },
];

const Tray = ({ items }: { items: typeof trayIcons }) => (
  <>
    {items.map((t) => <button key={t.label} aria-label={t.label} className="flex w-6 justify-center"><Svg w={18}><path d={t.d} /></Svg></button>)}
  </>
);

const Taskbar = () => (
  <div className="flex h-10 items-center bg-[#444] text-white">
    <button aria-label="开始菜单" className="flex h-full w-12 items-center justify-center">
      <svg width="17" height="17" viewBox="0 0 17 17" fill="#fff"><path d="M0 2.400L7.300 1.400v6.700H0zM8.100 1.300L17 0v8.100H8.100zM0 8.900h7.300v6.700L0 14.600zM8.100 8.900H17V17l-8.900-1.300z" /></svg>
    </button>
    <label className="flex h-full w-[344px] items-center border border-[#bbb] bg-[#f2f2f2] pt-px pl-[11px] text-black">
      <Svg w={17} sw={1.400}><circle cx="10.500" cy="6.500" r="5.500" /><path d="M6.500 10.500L.8 16.500" /></Svg>
      <input aria-label="搜索" placeholder="在这里输入你要搜索的内容" className="ml-[11px] w-full bg-transparent text-sm outline-none placeholder:text-[#222]" />
    </label>
    <TaskIcon label="任务视图">
      <path d="M5 7.500h10v9H5zM4.500 4v2h11V4M4.500 20v-2h11v2M19.500 4v3M19.500 12v8" stroke="#fff" strokeWidth="1.200" />
      <path d="M18 8h3v3h-3z" fill="#fff" />
    </TaskIcon>
    <TaskIcon label="Edge">
      <defs>
        <linearGradient id="edgeTop" x1="0" y1="0" x2="1" y2=".6"><stop stopColor="#1d9ad8" /><stop offset=".6" stopColor="#35c1c4" /><stop offset="1" stopColor="#62d856" /></linearGradient>
      </defs>
      <circle cx="12" cy="12" r="12" fill="#1575cf" />
      <path d="M0 11C1 4 6 0 12 0c7 0 12 5 12 10.500 0 4-3 6-6.500 6-2.500 0-4-.8-4-2 0-.8 1-1.200 1-3C14.500 9 12 7 8.500 7 4.500 7 1 9 0 11z" fill="url(#edgeTop)" />
      <path d="M8.500 12.500C7 17 11 21.500 16 21c2 0 4-1 5.500-2.500-2 4-6 5.500-9.500 5.500C6 23 4.500 16 8.500 12.500z" fill="#1050a5" />
      <path d="M13.500 14.500c0 1.200 1.500 2 4 2 2 0 4-.7 5.500-2.500l1 2-3 2.500c-4 1-9-1-7.500-4z" fill="#444" opacity=".7" />
    </TaskIcon>
    <TaskIcon label="文件资源管理器">
      <path d="M1 3h8l2 2H1z" fill="#e0a020" />
      <path d="M1 5h22v16H1z" fill="#fbd262" />
      <path d="M5 21v-6a2 2 0 0 1 2-2h10a2 2 0 0 1 2 2v6h-4v-3H9v3z" fill="#3e8fd0" />
    </TaskIcon>
    <TaskIcon label="商店">
      <path d="M7 6V1.500h10V6" stroke="#2c9bd6" strokeWidth="2" />
      <path d="M1 5h22v16a3 3 0 0 1-3 3H4a3 3 0 0 1-3-3z" fill="#f4f4f4" />
      <path d="M8 10h4v4H8z" fill="#e0522c" /><path d="M13 10h4v4h-4z" fill="#7ab32e" /><path d="M8 15h4v4H8z" fill="#2f8fd8" /><path d="M13 15h4v4h-4z" fill="#f0b62a" />
    </TaskIcon>
    <TaskIcon label="邮件">
      <path d="M0 8l12-7 12 7z" fill="#1058a8" />
      <path d="M2 8h20v10H2z" fill="#fff" />
      <path d="M0 7.500l12 7 12-7V23H0z" fill="#2aa4ea" />
      <path d="M24 7.500V23H12l-5-5.500z" fill="#1b86d6" opacity=".5" />
    </TaskIcon>
    <TaskIcon label="录屏" running>
      <circle cx="12" cy="12" r="10.500" fill="#0c0c0c" stroke="#fff" strokeWidth="1.200" />
      <circle cx="12" cy="12" r="6" fill="#ea3323" />
    </TaskIcon>
    <TaskIcon label="WPS" active>
      <rect x="1" y="1" width="22" height="22" rx="3" fill="#2f86f6" />
      <path d="M5 8h5l3 8 4-8h2.500M6 8l3 8 4-8 2 4" stroke="#fff" strokeWidth="1.500" />
    </TaskIcon>
    <div className="ml-auto flex h-full items-center">
      <Tray items={trayIcons} />
      <button aria-label="安全" className="flex w-6 justify-center">
        <svg width="18" height="18" viewBox="0 0 18 18"><circle cx="8" cy="8" r="7" fill="#2a7ad2" /><path d="M3 5c2-3 5-3 8-2L8 7z" fill="#7cc4f0" /><rect x="6" y="9" width="11" height="8" fill="#b8791a" stroke="#222" /></svg>
      </button>
      <Tray items={trayIcons2} />
      <button className="w-6 text-sm">英</button>
      <button aria-label="输入法" className="ml-1 flex w-6 justify-center"><Sogou size={17} /></button>
      <button aria-label="通知" className="ml-1 flex w-11 justify-center">
        <Svg w={18}><path d="M1.500 2.500h15v11H12l-3 3-3-3H1.500z" /></Svg>
      </button>
      <i className="mr-1 ml-[6px] h-full w-px bg-[#888]" />
    </div>
  </div>
);

export default function App() {
  return (
    <div className="relative flex h-screen flex-col overflow-hidden bg-[#f4f4f4] font-['Open_Sans','Noto_Sans_CJK_SC',sans-serif]">
      <TitleBar />
      <MenuRow />
      <Ribbon />
      <FormulaBar />
      <Sheet />
      <SheetTabs />
      <StatusBar />
      <Taskbar />
      <ImeBar />
    </div>
  );
}
